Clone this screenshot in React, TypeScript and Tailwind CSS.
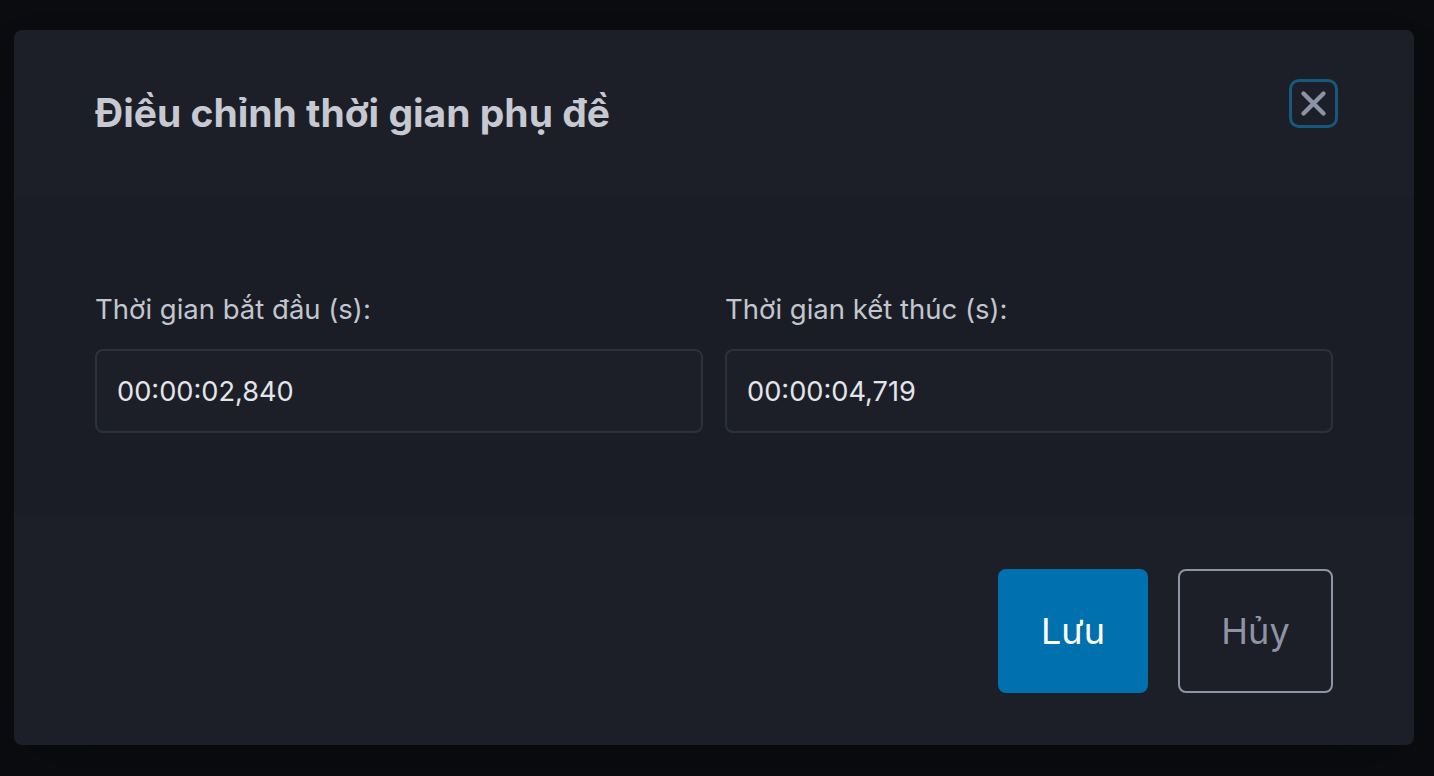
export default function App() {
  return (
    <div
      className="min-h-[776px] w-full bg-[#0b0c0f] pt-[30px] pl-[14px]"
      style={{ fontFamily: "Inter, 'Noto Sans', sans-serif" }}
    >
      <div className="flex h-[715px] w-[1400px] flex-col overflow-hidden rounded-[8px] bg-[#1c1f27] shadow-2xl">
        <div className="flex h-[166px] items-center justify-between pl-[81px] pr-[76px]">
          <h2 className="text-[39px] font-bold leading-[48px] text-[#c6c9d2]">
            Điều chỉnh thời gian phụ đề
          </h2>
          <button className="mt-[49px] flex h-[49px] w-[49px] items-center justify-center self-start rounded-[10px] border-[3px] border-[#15597f]">
            <svg width="27" height="27" viewBox="0 0 27 27" fill="none">
              <path
                d="M3.5 3.5 L23.5 23.5 M23.5 3.5 L3.5 23.5"
                stroke="#8c93a4"
                strokeWidth="4.4"
                strokeLinecap="round"
              />
            </svg>
          </button>
        </div>

        <div className="h-[320px] bg-[#1a1d25] px-[81px] pt-[96px]">
          <div className="grid grid-cols-2 gap-[22px]">
            {[
              { label: "Thời gian bắt đầu (s):", value: "00:00:02,840" },
              { label: "Thời gian kết thúc (s):", value: "00:00:04,719" },
            ].map((f) => (
              <div key={f.label} className="flex flex-col">
                <label className="mb-[23px] text-[27.5px] leading-[34px] text-[#c2c6ce]">
                  {f.label}
                </label>
                <div className="flex h-[84px] items-center rounded-[8px] border-2 border-[#2c313c] bg-[#1c1f28] px-[20px] pt-[2px] text-[27.2px] text-[#e3e5e9]">
                  {f.value}
                </div>
              </div>
            ))}
          </div>
        </div>

        <div className="flex flex-1 items-center justify-end gap-[30px] px-[81px]">
          <button className="flex h-[124px] w-[150px] items-center justify-center rounded-[8px] bg-[#0071ae] text-[36px] text-white">
            Lưu
          </button>
          <button className="flex h-[124px] w-[155px] items-center justify-center rounded-[8px] border-2 border-[#8e94a5] text-[36px] text-[#8e94a5]">
            Hủy
          </button>
        </div>
      </div>
    </div>
  );
}
